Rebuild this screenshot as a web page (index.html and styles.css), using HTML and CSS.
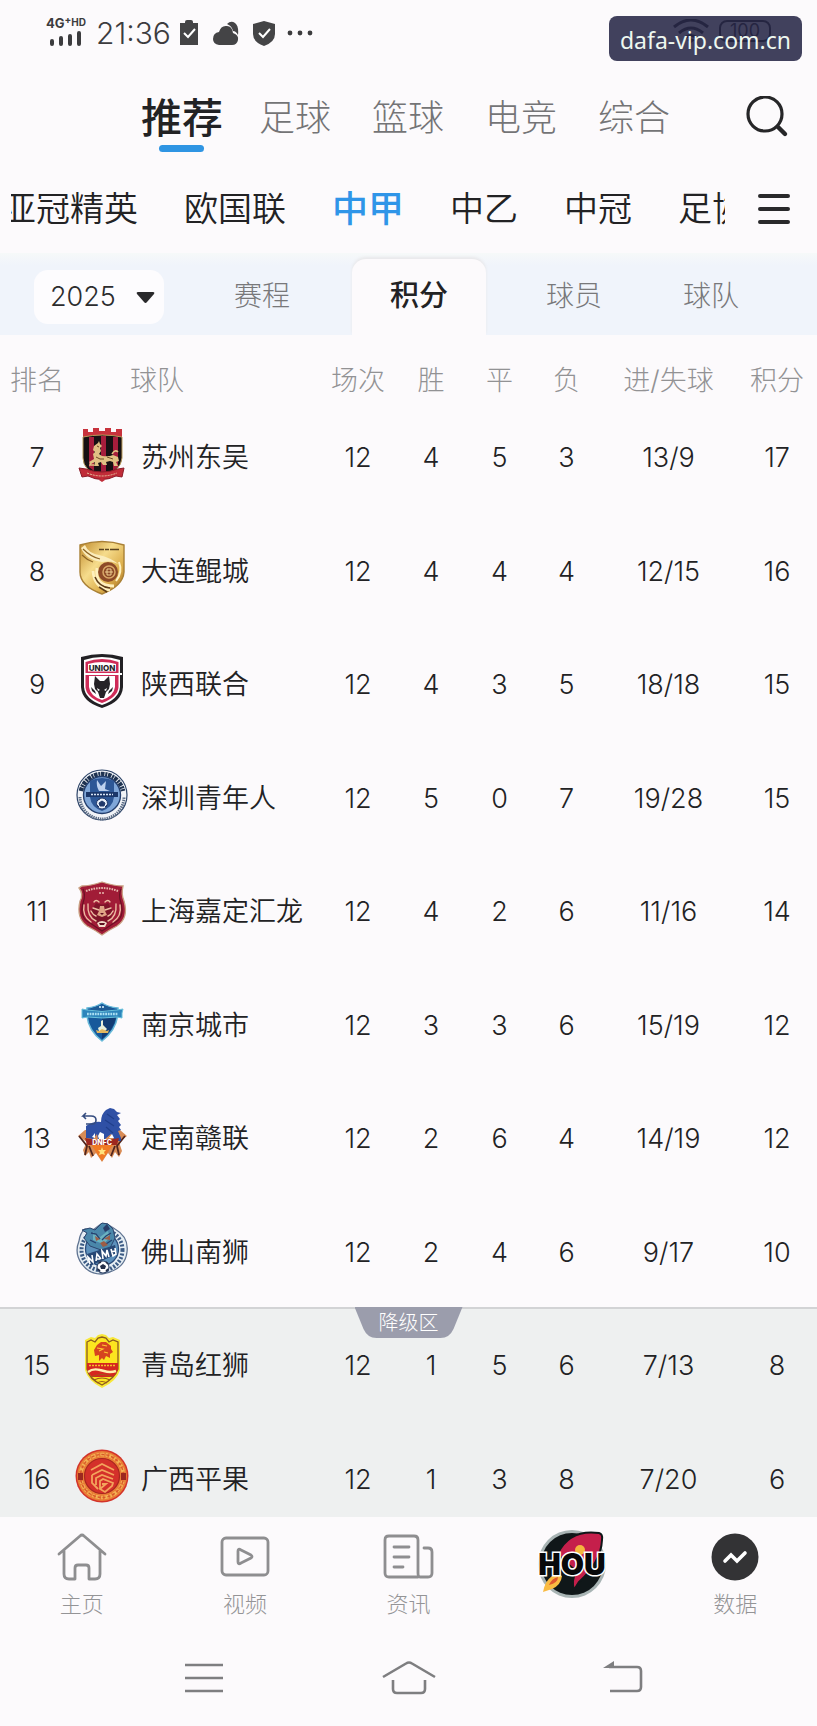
FILE: index.html
```html
<!DOCTYPE html>
<html lang="zh-CN">
<head>
<meta charset="utf-8">
<meta name="viewport" content="width=device-width, initial-scale=1">
<title>中甲积分榜</title>
<link rel="stylesheet" href="styles.css">
</head>
<body>
<div class="app">
  <header class="status">
    <div class="signal">
      <span class="signal-text">4G<sup>+</sup><small>HD</small></span>
      <svg width="34" height="16" viewBox="0 0 34 16"><g stroke="#3c3c3e" stroke-width="4" stroke-linecap="round"><path d="M3 10v3M12 7v6M21 5v8M30 2v11"/></g></svg>
    </div>
    <time class="clock">21:36</time>
    <svg class="st-clip" width="20" height="26" viewBox="0 0 20 26"><path d="M1 3h5V2q0-2 2-2h4q2 0 2 2v1h5v22H1z" fill="#444446"/><path d="M5 13l4 4 7-8" fill="none" stroke="#fff" stroke-width="2"/></svg>
    <svg class="st-cloud" width="26" height="25" viewBox="0 0 26 25"><path d="M14 3Q18-1 22 2Q26 5 25 14Q23 10 20 10Q19 5 14 3z" fill="#444446"/><path d="M6 24q-6-1-6-6 0-6 6-7 2-7 8-6 5 0 6 7 6 2 5 7-1 5-6 5z" fill="#444446"/></svg>
    <svg class="st-shield" width="22" height="25" viewBox="0 0 22 25"><path d="M11 0l11 3v10q0 8-11 12Q0 21 0 13V3z" fill="#444446"/><path d="M6 12l4 4 7-8" fill="none" stroke="#fff" stroke-width="2"/></svg>
    <svg class="st-dots" width="28" height="6" viewBox="0 0 28 6"><g fill="#3c3c3e"><circle cx="4" cy="3" r="2.4"/><circle cx="14" cy="3" r="2.4"/><circle cx="24" cy="3" r="2.4"/></g></svg>
    <div class="right-status">
      <svg width="36" height="24" viewBox="0 0 36 24"><g fill="none" stroke="#3c3c3e" stroke-width="3"><path d="M1 8q17-14 34 0M6 14q12-10 24 0M12 19q6-5 12 0"/></g><path d="M14 21q4-3 8 0l-4 3z" fill="#3c3c3e"/></svg>
      <span class="battery">100</span>
    </div>
    <div class="site">dafa-vip.com.cn</div>
  </header>

  <nav class="channels" aria-label="频道">
    <a class="channel active" href="#">推荐</a>
    <a class="channel" href="#">足球</a>
    <a class="channel" href="#">篮球</a>
    <a class="channel" href="#">电竞</a>
    <a class="channel" href="#">综合</a>
    <button class="icon-btn search" aria-label="搜索"><svg width="44" height="44" viewBox="0 0 44 44"><circle cx="20" cy="18" r="17" fill="none" stroke="#262628" stroke-width="3.2"/><path d="M33 31l7 7" stroke="#262628" stroke-width="4.4" stroke-linecap="round"/></svg></button>
  </nav>

  <nav class="leagues" aria-label="联赛">
    <div class="league-list">
      <a class="league" href="#">亚冠精英</a>
      <a class="league" href="#">欧国联</a>
      <a class="league active" href="#">中甲</a>
      <a class="league" href="#">中乙</a>
      <a class="league" href="#">中冠</a>
      <a class="league" href="#">足协杯</a>
    </div>
    <button class="icon-btn" aria-label="全部联赛"><svg width="34" height="34" viewBox="0 0 34 34"><path d="M3 4h28M3 17h28M3 30h28" stroke="#29292b" stroke-width="4" stroke-linecap="round"/></svg></button>
  </nav>

  <div class="subtabs">
    <label class="season">
      <select aria-label="赛季"><option>2025</option></select>
      <svg width="19" height="13" viewBox="0 0 19 13"><path d="M2 1h15q2 0 1 2l-7 8q-1.500 2-3 0L1 3Q0 1 2 1z" fill="#29292b"/></svg>
    </label>
    <button class="subtab">赛程</button>
    <button class="subtab active">积分</button>
    <button class="subtab">球员</button>
    <button class="subtab">球队</button>
  </div>

  <main class="board">
    <table class="standings">
      <colgroup><col class="c-rank"><col><col class="c-games"><col class="c-win"><col class="c-num"><col class="c-num"><col class="c-goals"><col class="c-pts"></colgroup>
      <thead>
        <tr><th>排名</th><th class="th-team">球队</th><th>场次</th><th>胜</th><th>平</th><th>负</th><th>进/失球</th><th>积分</th></tr>
      </thead>
      <tbody>
        <tr><td>7</td><td><div class="team">
          <svg class="crest" viewBox="0 0 56 60"><path d="M9 3h5v3h5V2h6v3h6V2h6v4h5V3h6v9H9z" fill="#c8323c"/><path d="M9 11Q28 7 48 11V32Q47 45 28 51Q9 45 9 32z" fill="#161013" stroke="#b99a5a" stroke-width="1"/><path d="M15 11h5v34l-5-4zM27 10h5v39h-5zM39 11h5v30l-5 4z" fill="#a51d3c"/><g fill="#e0c184"><path d="M19 24l1-4 4-3 1-2 1 3 2 2-2 2 1 3-2 3 3 2q7 1 11-1l5 2 1 4-3 1 2 4h-4l-1-4-3-1-4 1 1 3h-4l-2-3-3 1 1 3h-5l1-4-4 2-2-2 5-3-1-5 2-2z"/></g><path d="M38 28q3-5 6-2M17 36l-1 3h4" fill="none" stroke="#e0c184" stroke-width="1.600"/><path d="M23 20l2 1M22 31q4 3 8 2M33 31l6 2" stroke="#6b4a25" fill="none"/><path d="M5 42l7 1q16 6 32 0l6-1-2 9-6-1q-14 7-28 0l-6 1z" fill="#c02c38" stroke="#8c1b28"/><path d="M13 47q15 6 30 0" fill="none" stroke="#e6c7a0" stroke-width="1" stroke-dasharray="2 1"/><path d="M28 52l3 2-3 2-3-2z" fill="#c02c38"/></svg>苏州东吴</div></td><td>12</td><td>4</td><td>5</td><td>3</td><td>13/9</td><td>17</td></tr>
        <tr><td>8</td><td><div class="team">
          <svg class="crest" viewBox="0 0 56 60"><defs><linearGradient id="gold" x1="0" y1="0" x2="1" y2="1"><stop offset="0" stop-color="#c08a2c"/><stop offset=".4" stop-color="#f6dc8c"/><stop offset=".7" stop-color="#dcae4c"/><stop offset="1" stop-color="#a46a1c"/></linearGradient></defs><path d="M6 5Q28-2 50 5V32Q49 46 28 54Q6 46 6 32z" fill="url(#gold)" stroke="#a98036" stroke-width="1.400"/><path d="M11 5Q14 13 25 15T47 26Q40 20 28 22Q12 20 7 8z" fill="#fbedbd"/><path d="M9 9q8 8 17 10M8 15q5 5 11 7" fill="none" stroke="#8e6526" stroke-width="1.200"/><path d="M25 9.500h5M31 9.500h4M36 9.500h9" stroke="#5b4420" stroke-width="1.500"/><circle cx="34" cy="32" r="10" fill="#8d4a27"/><circle cx="35" cy="32" r="6" fill="none" stroke="#d9a868" stroke-width="1.500"/><path d="M33 29h4v6h-4zM31 32h8" fill="none" stroke="#efcf92"/><path d="M23 28Q20 46 40 46M19 31q1 17 17 19" fill="none" stroke="#fff0bd" stroke-width="2.800"/><path d="M21 37q4 10 15 11M25 47l8 5" fill="none" stroke="#5c3b18" stroke-width="1.500"/><path d="M45 22q4 10-3 19" stroke="#fff0bd" stroke-width="2" fill="none"/></svg>大连鲲城</div></td><td>12</td><td>4</td><td>4</td><td>4</td><td>12/15</td><td>16</td></tr>
        <tr><td>9</td><td><div class="team">
          <svg class="crest" viewBox="0 0 56 60"><path d="M7 4Q28-2 49 4V34Q48 49 28 55Q8 49 7 34z" fill="#222024"/><path d="M10 7Q28 1 46 7V34Q45 46 28 52Q11 46 10 34z" fill="#fff"/><path d="M11.500 9Q28 3 44.500 9V34Q44 44 28 50Q12 44 11.500 34z" fill="#cf2b58"/><path d="M14 11Q28 7 42 11V18.500H14z" fill="#fff"/><path d="M15 23h26v11q-1 9-13 13q-12-4-13-13z" fill="#fff"/><path d="M10 20h38v2H10z" fill="#fff"/><text x="28" y="17.500" class="crest-union" text-anchor="middle">UNION</text><path d="M21 23l5 5h4l5-5 1 8-1 5-3 3-2 6h-4l-2-6-3-3-1-5zM17 34l4 4 1 3-4-3zM39 34l-4 4-1 3 4-3z" fill="#252327"/><path d="M23 35l3 2-2 1zM33 35l-3 2 2 1z" fill="#fff"/></svg>陕西联合</div></td><td>12</td><td>4</td><td>3</td><td>5</td><td>18/18</td><td>15</td></tr>
        <tr><td>10</td><td><div class="team">
          <svg class="crest" viewBox="0 0 56 60"><circle cx="28" cy="28" r="25" fill="#f1f3f7" stroke="#2d4468" stroke-width="1.200"/><path d="M7 24A21.500 21.500 0 0 1 49 24" fill="none" stroke="#1f3351" stroke-width="4.600" stroke-dasharray="3.500 .8 2 .7"/><path d="M6 30A22 22 0 0 0 50 30" fill="none" stroke="#5b6b84" stroke-width="3" stroke-dasharray="1.400 .9"/><circle cx="28" cy="28" r="18.500" fill="#7fa6d8" stroke="#243f6e" stroke-width="1.400"/><path d="M16 14q12-6 24 0v16q-1 10-12 14q-11-4-12-14z" fill="#2d5796"/><path d="M23 13l4 6 5-5-1 8 5 2h-11q-3-5-2-11z" fill="#bdd1ee"/><path d="M12 25h32v5H12z" fill="#1b376a"/><path d="M17 27.500h22" stroke="#d9e5f6" stroke-width="1.500" stroke-dasharray="2 1"/><circle cx="28" cy="36.500" r="5.500" fill="#e9f0fa" stroke="#20396a"/><path d="M28 34l3 2-1 3h-4l-1-3zM24 33l2-1M31 32l2 2M25 40l-2-2M31 40l2-2" fill="#20396a" stroke="#20396a"/></svg>深圳青年人</div></td><td>12</td><td>5</td><td>0</td><td>7</td><td>19/28</td><td>15</td></tr>
        <tr><td>11</td><td><div class="team">
          <svg class="crest" viewBox="0 0 56 60"><path d="M8 6Q16 6 28 2Q40 6 49 6Q47 14 50 21Q55 38 43 46Q35 50 28 55Q21 50 13 46Q2 38 6 21Q10 14 5 8z" fill="#a11c37" stroke="#c9a082" stroke-width="1.300"/><path d="M9 9q3 6 0 14Q5 38 16 43l12 8 12-8Q51 38 47 23q-3-8 0-14" fill="none" stroke="#6b1024" stroke-width="1.200"/><path d="M12 11q16-6 32 0" fill="none" stroke="#e7b8ae" stroke-width="2" stroke-dasharray="1.600 1"/><path d="M25 13h6" stroke="#e7b8ae" stroke-width="1.600" stroke-dasharray="2 1"/><path d="M22 23q6 3 12 0l5 8-3 10-8 6-8-6-3-10z" fill="#7e1429"/><g fill="none" stroke="#edbda3" stroke-width="1.400" stroke-linecap="round"><path d="M20 22q2-3 5 0M36 22q-2-3-5 0M19 28l6 2M37 28l-6 2M14 24q-1 13 8 17M42 24q1 13-8 17M17 31q2 4 5 5M39 31q-2 4-5 5M10 25q-2 11 7 17M46 25q2 11-7 17"/></g><path d="M25 31l1-5h4l1 5 2 4-5 2-5-2z" fill="#dfa486"/><path d="M26 33h4l-2 2z" fill="#5e0e20"/><path d="M23 43q5-4 10 0l-2 4h-6z" fill="#f3dccb"/><path d="M25 43h6l-1 2h-4z" fill="#5e0e20"/></svg>上海嘉定汇龙</div></td><td>12</td><td>4</td><td>2</td><td>6</td><td>11/16</td><td>14</td></tr>
        <tr><td>12</td><td><div class="team">
          <svg class="crest" viewBox="0 0 56 60"><path d="M13 14Q22 13 28 9Q34 13 44 14Q45 34 28 47Q11 34 13 14z" fill="#17599b" stroke="#68b9d9" stroke-width="1.500"/><path d="M28 23h14Q40 35 28 45z" fill="#123c74"/><path d="M18 14q10-4 20 0v3H18z" fill="#1e5c96"/><path d="M25 13h6" stroke="#e1f8ff" stroke-width="1.500" stroke-dasharray="2 1"/><path d="M8 15l5 1q15 3 30 0l6-1-1 4v5l-5-1q-14 2-29 0l-6 1v-5z" fill="#2d85bb" stroke="#69c1dc"/><path d="M13 20h31" stroke="#a9def2" stroke-width="2.400" stroke-dasharray="1.800 .8"/><path d="M27 27l2-1v5l4 4-2 2h-6l-1-3 3-2z" fill="#e9efdc"/><path d="M22 36l3 1 3-2 5 2 2-1-1 3h-11z" fill="#e2b75f"/></svg>南京城市</div></td><td>12</td><td>3</td><td>3</td><td>6</td><td>15/19</td><td>12</td></tr>
        <tr><td>13</td><td><div class="team">
          <svg class="crest" viewBox="0 0 56 60"><path d="M4 29l7-6h35l7 6-8 6 3 9-3 6-4-5-3 6-4-5-6 9-6-9-5 5-2-6-4 4-2-6 4-8z" fill="#d98c56"/><path d="M28 54L14 33h28z" fill="#f07a25"/><path d="M5 29l8 10-2 9M51 29l-8 10 2 9M15 39l4 10M41 39l-4 10" fill="none" stroke="#51251d" stroke-width="1.800"/><path d="M12 31V19q8-5 15-4 0-8 5-12l4-2 4 1 3 3 4 1-4 2 3 4-2 2 3 4-2 2 2 3-3 1 3 7v3h-6l-4-7-6 5h-7l-1-5-4 5z" fill="#2f50a5"/><path d="M33 7l7 5M31 13l9 6M32 20l7 6" stroke="#203f8b" stroke-width="1.200"/><path d="M24 29l2-4 4 2v5h-5zM18 30l3-4v5zM35 31l3-4 2 4z" fill="#fff"/><path d="M12 17h6q4 0 4-4t-5-4H9l3-3M9 9l3 3" fill="none" stroke="#354c7f" stroke-width="1.600"/><path d="M11 31q17 4 34 0l-2 7H13z" fill="#9d281f"/><text x="28" y="37.500" class="crest-dnfc" text-anchor="middle">DNFC</text><path d="M28 40l1 3h3l-2 2 1 3-3-1-3 1 1-3-2-2h3z" fill="#ffe27d"/></svg>定南赣联</div></td><td>12</td><td>2</td><td>6</td><td>4</td><td>14/19</td><td>12</td></tr>
        <tr><td>14</td><td><div class="team">
          <svg class="crest" viewBox="0 0 56 60"><path d="M28 53A24 24 0 0 1 5 20q1-8 6-12l8 1 8-6 6 0 8 5q14 8 12 23Q51 49 28 53z" fill="#e5edf3" stroke="#5f7391" stroke-width="1.300"/><circle cx="28" cy="29" r="20.500" fill="none" stroke="#3b5a84" stroke-width="4" stroke-dasharray="2 1.600"/><circle cx="28" cy="28" r="16.500" fill="#5d91bc" stroke="#2a4b7b" stroke-width="1.300"/><path d="M8 9l8-2 5 2 7-7 6 1 5 5 2 9-5 10-9 2-11-4-6-8 3-5z" fill="#4a87aa" stroke="#2b456e"/><path d="M19 11l7 5 8-6 2 7-7 6-10-4z" fill="#6bb3c0"/><path d="M17 12l5 1 4 5M37 12l-5 3-4 4M16 19l6 3M38 19l-6 4" fill="none" stroke="#26416f" stroke-width="1.300"/><path d="M21 15l5 3-4 2zM36 14l-6 4 6 1zM26 22l4-2 4 4-5 2z" fill="#9c5d46"/><path d="M29 7l4-4 3 5-5 3z" fill="#293d68"/><path d="M13 33l28-9 2 9-27 12z" fill="#284875"/><g fill="none" stroke="#fff" stroke-width="1.600"><path d="M16 43l-2-7 5 5-1-7M22 40l1-7 4 5M23 38h3M29 38l-1-8 4 5 1-6 2 7M37 28l2 7 3-2-1-6M37 31l4-1"/></g><circle cx="29" cy="46" r="6" fill="#fff" stroke="#34486a" stroke-width="1.200"/><path d="M29 43l3 2-1 3h-4l-1-3z" fill="#242e47"/><path d="M25 42l2-1M32 41l2 2M24 48l2 2M32 50l2-2" stroke="#242e47" stroke-width="1.600"/></svg>佛山南狮</div></td><td>12</td><td>2</td><td>4</td><td>6</td><td>9/17</td><td>10</td></tr>
        <tr class="drop drop-first"><td>15<span class="zone">降级区</span></td><td><div class="team">
          <svg class="crest" viewBox="0 0 56 60"><path d="M11 6l6-3 4 1 3-3 4-1 4 1 3 3 4-1 7 3v30q-3 11-18 18Q14 47 11 36z" fill="#f8e839"/><path d="M13 8l4-2 4 2 3-4 4-1 4 1 3 4 4-2 5 2v27q-3 9-16 16Q15 45 13 35z" fill="#fce51f" stroke="#8b5b1f" stroke-width="1.300"/><path d="M13 29h31v6q-1 4-5 8H18q-4-4-5-8z" fill="#d5271f"/><path d="M20 16l3-5 4-3h5l5 4v3l2 3-3 2v4l-4-2-2 4-2-2-3 3v-6l-4 1z" fill="#d6441f"/><path d="M23 14l6 1-4 2M28 11l5 1M30 18l4 1" fill="none" stroke="#ffc730" stroke-width="1.100"/><path d="M15 31.500h27" stroke="#f5bd29" stroke-width="1.600" stroke-dasharray="2 1"/><path d="M14 38q5-4 12-2l4 1q6 2 12 0" fill="none" stroke="#fff0b0" stroke-width="2.400"/><path d="M17 43q11-5 22 0M20 46q8-4 16 0M23 49q5-3 10 0" fill="none" stroke="#9c5a1c" stroke-width="1.200"/></svg>青岛红狮</div></td><td>12</td><td>1</td><td>5</td><td>6</td><td>7/13</td><td>8</td></tr>
        <tr class="drop"><td>16</td><td><div class="team">
          <svg class="crest" viewBox="0 0 56 60"><circle cx="28" cy="28" r="26.500" fill="#d3332a"/><circle cx="28" cy="28" r="25" fill="#e87c35"/><circle cx="28" cy="28" r="21.500" fill="none" stroke="#f3b254" stroke-width="3.600" stroke-dasharray="4 1.500 2 1.500"/><circle cx="28" cy="28" r="21.500" fill="none" stroke="#d85a2b" stroke-width="1.400" stroke-dasharray="3 2"/><circle cx="28" cy="28" r="17.500" fill="#d4302a" stroke="#a9251f" stroke-width="1.200"/><path d="M4 25h5v7H4zM47 25h5v7h-5z" fill="#9d2820"/><g fill="none" stroke="#f3a45c" stroke-width="1.800"><path d="M17 22l11-6 12 6M18 27l10-5 12 5M18 27v8l6 6M22 37v-7l6-3 11 4M26 41v-8l3-2 10 4-1 3-7 6-5-3 6-5h-4"/></g></svg>广西平果</div></td><td>12</td><td>1</td><td>3</td><td>8</td><td>7/20</td><td>6</td></tr>
      </tbody>
    </table>
  </main>

  <nav class="tabbar" aria-label="主导航">
    <a class="tab" href="#"><svg width="52" height="52" viewBox="0 0 52 52"><g fill="none" stroke="#8e8e90" stroke-width="2.800" stroke-linecap="round" stroke-linejoin="round"><path d="M3 23L24 5q2-2 4 0l21 18M8 20v23q0 5 5 5h6V37q0-3 3-3h8q3 0 3 3v11h6q5 0 5-5V20"/></g></svg><span>主页</span></a>
    <a class="tab" href="#"><svg width="52" height="52" viewBox="0 0 52 52"><g fill="none" stroke="#8e8e90" stroke-width="2.800" stroke-linejoin="round"><rect x="3" y="7" width="46" height="37" rx="4"/><path d="M19 20q0-3 3-1l10 5q2 1.500 0 3l-10 5q-3 2-3-1z"/></g></svg><span>视频</span></a>
    <a class="tab" href="#"><svg width="52" height="52" viewBox="0 0 52 52"><g fill="none" stroke="#8e8e90" stroke-width="2.800" stroke-linecap="round" stroke-linejoin="round"><path d="M36 46H7q-4 0-4-4V9q0-4 4-4h25q4 0 4 4v33q0 4 2 4h8q4 0 4-4V21q0-4-4-4h-4"/><path d="M12 16h15M12 26h15M12 36h9"/></g></svg><span>资讯</span></a>
    <a class="tab tab-team" href="#" aria-label="火箭"><svg width="76" height="74" viewBox="0 0 76 74"><circle cx="38" cy="37" r="34" fill="#a8b4b4"/><circle cx="38" cy="37" r="31" fill="#101719"/><path d="M24 26Q36 2 65 6q4 1 3 7-1 22-23 42l-5 8q-3-9 2-19l-14-12z" fill="#c51f4b" stroke="#101719" stroke-width="2"/><circle cx="46" cy="23" r="5" fill="#f4b53e"/><path d="M9 65q2-11 9-16 7-3 10 0-1 9-10 13z" fill="#f9bb42"/><path d="M15 58q3-7 9-8 0 6-9 8z" fill="#df572f"/><text x="38" y="48" text-anchor="middle" class="hou">HOU</text></svg></a>
    <a class="tab" href="#"><svg width="52" height="52" viewBox="0 0 52 52"><circle cx="26" cy="26" r="23.500" fill="#333335"/><path d="M16 30l6-6 6 6 8-8" fill="none" stroke="#fff" stroke-width="3.600" stroke-linecap="round"/></svg><span>数据</span></a>
  </nav>

  <nav class="sysbar" aria-label="系统导航">
    <button class="icon-btn" aria-label="最近任务"><svg width="40" height="36" viewBox="0 0 40 36"><path d="M1 5h38M1 18h38M1 31h38" stroke="#7e7e80" stroke-width="2.600"/></svg></button>
    <button class="icon-btn" aria-label="主屏幕"><svg width="56" height="36" viewBox="0 0 56 36"><path d="M2 17L25 3.500q3-2 6 0L54 17M12 20v9q0 4 4 4h24q4 0 4-4v-9" fill="none" stroke="#7e7e80" stroke-width="2.600"/></svg></button>
    <button class="icon-btn" aria-label="返回"><svg width="40" height="36" viewBox="0 0 40 36"><path d="M7 31h27q4 0 4-4V11q0-4-4-4H6" fill="none" stroke="#7e7e80" stroke-width="2.600"/><path d="M0 8l11-7v7z" fill="#7e7e80"/></svg></button>
  </nav>
</div>
</body>
</html>
```
FILE: styles.css
```css
* { box-sizing: border-box; }

body {
  margin: 0;
  background: #fcfafc;
  color: #222224;
  font-family: Inter, "Noto Sans CJK SC", sans-serif;
  font-weight: 300;
}

a { color: inherit; text-decoration: none; }
button, select { font: inherit; color: inherit; border: 0; background: none; margin: 0; padding: 0; }
svg { display: block; flex: none; }

.app {
  display: flex;
  flex-direction: column;
  height: 100vh;
  overflow: hidden;
}

/* status bar */
.status {
  position: relative;
  flex: none;
  display: flex;
  align-items: center;
  height: 72px;
  padding: 0 46px 6px 45px;
  color: #3c3c3e;
}
.signal { display: flex; flex-direction: column; align-items: center; gap: 2px; width: 42px; margin-right: 9px; padding-bottom: 4px; }
.signal-text { font-size: 13px; line-height: 12px; font-weight: 700; white-space: nowrap; }
.signal-text sup { font-size: 10px; line-height: 0; }
.signal-text small { font-size: 10px; vertical-align: 2px; }
.clock { font-size: 30px; line-height: 36px; }
.st-clip { margin-left: 8px; }
.st-cloud { margin-left: 14px; }
.st-shield { margin-left: 14px; }
.st-dots { margin-left: 11px; }
.right-status { display: flex; align-items: center; gap: 10px; margin-left: auto; padding-bottom: 4px; }
.battery {
  width: 52px;
  border: 2px solid #3c3c3e;
  border-radius: 8px;
  font-size: 18px;
  line-height: 18px;
  font-weight: 400;
  text-align: center;
}
.site {
  position: absolute;
  top: 16px;
  right: 15px;
  padding: 3px 11px 0;
  border-radius: 8px;
  background: rgba(34, 34, 66, .86);
  color: #eef8f0;
  font: 400 23px/42px "Noto Sans", sans-serif;
}

/* channels */
.channels {
  flex: none;
  display: flex;
  align-items: center;
  gap: 41px;
  height: 92px;
  padding: 0 28px 0 141px;
  color: #747476;
  font-size: 36px;
  line-height: 52px;
}
.channel { white-space: nowrap; }
.channel.active { position: relative; margin-right: -5px; color: #222224; font-size: 41px; font-weight: 500; }
.channel.active::after {
  content: "";
  position: absolute;
  bottom: -8px;
  left: 50%;
  width: 45px;
  height: 7px;
  margin-left: -23px;
  border-radius: 4px;
  background: #2f95e3;
}
.icon-btn { display: grid; place-items: center; cursor: pointer; }
.search { margin-left: auto; }

/* leagues */
.leagues {
  flex: none;
  display: flex;
  align-items: center;
  justify-content: space-between;
  height: 89px;
  padding: 0 26px 0 11px;
}
.league-list {
  flex: 1;
  min-width: 0;
  display: flex;
  gap: 46px;
  margin-right: 32px;
  overflow: hidden;
  font-size: 34px;
  font-weight: 350;
  line-height: 52px;
}
.league { flex: none; white-space: nowrap; }
.league:first-child { margin-left: -9px; }
.league.active { color: #2f95e8; font-size: 36px; font-weight: 500; }

/* season and sections */
.subtabs {
  flex: none;
  display: grid;
  grid-template-columns: 172fr 180fr 134fr 176fr 98fr 57fr;
  align-items: stretch;
  height: 82px;
  padding-top: 6px;
  background: linear-gradient(#f6f9f9, #f0f4fb 12px);
  color: #78787a;
  font-size: 28px;
  line-height: 40px;
}
.season {
  display: flex;
  align-items: center;
  align-self: center;
  height: 54px;
  margin: 0 8px 0 34px;
  padding: 0 9px 0 16px;
  border-radius: 14px;
  background: #fdfcfe;
  color: #2c2c2e;
}
.season select { flex: 1; min-width: 0; appearance: none; font-size: 27px; line-height: 40px; outline: 0; }
.subtab { cursor: pointer; padding-bottom: 2px; }
.subtab.active {
  border-radius: 14px 14px 0 0;
  background: #fcfafc;
  box-shadow: 0 -2px 3px #e8e8ea;
  color: #222224;
  font-size: 29px;
  font-weight: 500;
}

/* standings */
.board { flex: 1; min-height: 0; overflow: hidden; }
.standings {
  width: 100%;
  table-layout: fixed;
  border-collapse: collapse;
  font-size: 27px;
  line-height: 36px;
  text-align: center;
}
.c-rank { width: 74px; }
.c-games { width: 76px; }
.c-win { width: 70px; }
.c-num { width: 67px; }
.c-goals { width: 137px; }
.c-pts { width: 80px; }
.standings th {
  height: 64px;
  padding: 28px 0 0;
  color: #929294;
  font-size: 27px;
  font-weight: 300;
  white-space: nowrap;
}
.standings .th-team { padding-left: 56px; text-align: left; }
.standings td { height: 113px; padding: 4px 0 0; }
.standings tr:nth-child(odd) td { height: 114px; }
.team { display: flex; align-items: center; gap: 11px; font-weight: 350; text-align: left; white-space: nowrap; }
.crest { width: 56px; height: 60px; margin-top: -4px; }
.crest-union { font: 800 8px Inter, sans-serif; fill: #252327; }
.crest-dnfc { font: 800 7px Inter, sans-serif; fill: #fff; }
.drop { background: #eef0f0; }
.drop-first { position: relative; box-shadow: inset 0 2px #d2d3d5; }
.zone {
  position: absolute;
  top: 0;
  left: 50%;
  width: 108px;
  height: 31px;
  margin-left: -54px;
  background: #9b9dac;
  clip-path: path("M0 0H108L99 22Q95 31 86 31H22Q13 31 9 22Z");
  color: #fff;
  font-size: 20px;
  line-height: 33px;
}

/* app navigation */
.tabbar {
  flex: none;
  display: grid;
  grid-template-columns: repeat(5, 1fr);
  height: 123px;
  padding-top: 14px;
  color: #949496;
  font-size: 22px;
  line-height: 32px;
}
.tab { display: flex; flex-direction: column; align-items: center; gap: 5px; }
.tab-team svg { margin-top: -4px; }
.hou {
  font: 900 30px Inter, sans-serif;
  fill: #08090b;
  stroke: #fff;
  stroke-width: 3px;
  paint-order: stroke;
}

/* system navigation */
.sysbar {
  flex: none;
  display: grid;
  grid-template-columns: 205fr 205fr 223fr;
  height: 86px;
  padding: 0 83px 10px 102px;
}
```
